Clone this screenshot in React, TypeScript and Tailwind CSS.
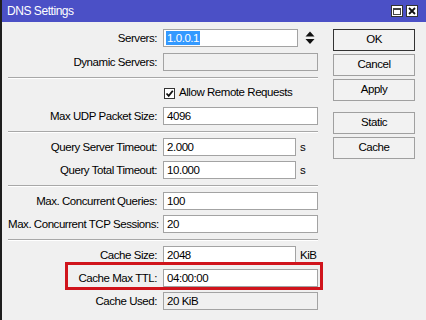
import React from "react";

const font = { fontFamily: '"Liberation Sans", Arial, sans-serif' };

function Label({ children }: { children: React.ReactNode }) {
  return <div className="w-[149px] shrink-0 text-right whitespace-nowrap leading-[18px]">{children}</div>;
}

function Input({ value, w = "w-[155px]", disabled = false }: { value?: string; w?: string; disabled?: boolean }) {
  return (
    <div
      className={`${w} h-[18px] ml-[6px] border border-[#a3a3a3] ${disabled ? "bg-[#f0f0f0]" : "bg-white"} pl-[3px] leading-[16px] whitespace-nowrap overflow-hidden`}
    >
      {value}
    </div>
  );
}

function Row({ children, h = "h-[23px]" }: { children: React.ReactNode; h?: string }) {
  return <div className={`${h} flex items-start`}>{children}</div>;
}

function Sep() {
  return (
    <div className="h-[8px] pt-[1px]">
      <div className="h-[2px] border-t border-[#a8a8a8] border-b border-b-white" />
    </div>
  );
}

function Btn({ children, def = false, extra = "" }: { children: React.ReactNode; def?: boolean; extra?: string }) {
  return (
    <div
      className={`h-[22px] w-[82px] flex items-center justify-center bg-[#f2f2f2] border ${def ? "border-[#333333]" : "border-[#a0a0a0]"} ${extra}`}
    >
      {children}
    </div>
  );
}

export default function App() {
  return (
    <div
      className="w-[426px] h-[320px] bg-[#f0f0f0] border-l-2 border-[#1e1e1e] text-[11.5px] tracking-[-0.45px] text-black overflow-hidden"
      style={font}
    >
      <div className="h-[22px] bg-[#4b50c6] flex items-center pl-[5px] text-white text-[12px]">
        <span className="flex-1">DNS Settings</span>
        <div className="flex gap-[3px] mr-[8px]">
          <div className="w-[12px] h-[12px] bg-white border border-[#333] flex items-center justify-center">
            <div className="w-[8px] h-[7px] border border-[#444] border-t-2" />
          </div>
          <div className="w-[12px] h-[12px] bg-white border border-[#333] flex items-center justify-center">
            <svg width="8" height="8" viewBox="0 0 8 8">
              <path d="M1 1 L7 7 M7 1 L1 7" stroke="#111" strokeWidth="1.8" />
            </svg>
          </div>
        </div>
      </div>
      <div className="relative flex">
        <div className="w-[310px] ml-[6px] pt-[7px]">
          <Row h="h-[24px]">
            <Label>Servers:</Label>
            <div className="w-[135px] h-[18px] ml-[6px] border border-[#a3a3a3] bg-white pl-[2px] flex items-center">
              <span className="bg-[#3399ff] text-white px-[1px] leading-[14px]">1.0.0.1</span>
            </div>
            <div className="ml-[7px] h-[18px] flex items-center">
              <svg width="10" height="14" viewBox="0 0 10 14">
                <path d="M5 0.5 L9.5 5.5 L0.5 5.5 Z" fill="#111" />
                <path d="M0.5 8 L9.5 8 L5 13 Z" fill="#111" />
              </svg>
            </div>
          </Row>
          <Row>
            <Label>Dynamic Servers:</Label>
            <Input disabled />
          </Row>
          <Sep />
          <Row>
            <div className="w-[149px] shrink-0" />
            <div className="ml-[7px] h-[18px] flex items-center">
              <div className="w-[11px] h-[11px] bg-white border border-[#333] flex items-center justify-center">
                <svg width="9" height="9" viewBox="0 0 9 9">
                  <path d="M1.5 4.5 L3.7 6.8 L7.8 1.8" stroke="#111" strokeWidth="1.8" fill="none" />
                </svg>
              </div>
              <span className="ml-[4px]">Allow Remote Requests</span>
            </div>
          </Row>
          <Row>
            <Label>Max UDP Packet Size:</Label>
            <Input value="4096" />
          </Row>
          <Sep />
          <Row>
            <Label>Query Server Timeout:</Label>
            <Input value="2.000" w="w-[133px]" />
            <span className="ml-[4px] leading-[18px]">s</span>
          </Row>
          <Row>
            <Label>Query Total Timeout:</Label>
            <Input value="10.000" w="w-[133px]" />
            <span className="ml-[4px] leading-[18px]">s</span>
          </Row>
          <Sep />
          <Row>
            <Label>Max. Concurrent Queries:</Label>
            <Input value="100" />
          </Row>
          <Row>
            <Label>Max. Concurrent TCP Sessions:</Label>
            <Input value="20" />
          </Row>
          <Sep />
          <Row>
            <Label>Cache Size:</Label>
            <Input value="2048" w="w-[133px]" />
            <span className="ml-[4px] leading-[18px]">KiB</span>
          </Row>
          <Row>
            <Label>Cache Max TTL:</Label>
            <Input value="04:00:00" />
          </Row>
          <Row>
            <Label>Cache Used:</Label>
            <Input value="20 KiB" disabled />
          </Row>
        </div>
        <div className="ml-[15px] pt-[7px] flex flex-col gap-[3px]">
          <Btn def>OK</Btn>
          <Btn>Cancel</Btn>
          <Btn>Apply</Btn>
          <Btn extra="mt-[8px]">Static</Btn>
          <Btn>Cache</Btn>
        </div>
        <div className="absolute left-[63px] top-[240px] w-[258px] h-[28px] border-[3px] border-[#d0141c]" />
      </div>
    </div>
  );
}
